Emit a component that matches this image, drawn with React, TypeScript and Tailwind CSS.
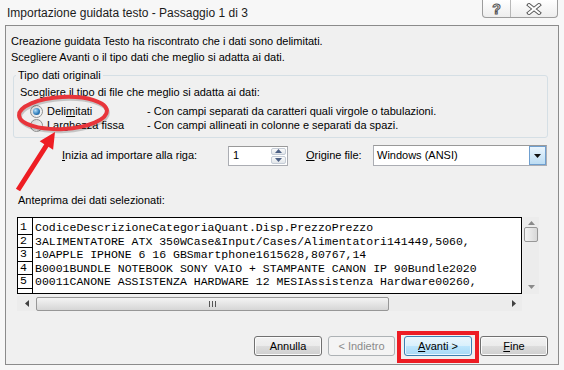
import type { ReactNode } from 'react'

const previewRows = [
  'CodiceDescrizioneCategoriaQuant.Disp.PrezzoPrezzo',
  '3ALIMENTATORE ATX 350WCase&Input/Cases/Alimentatori141449,5060,',
  '10APPLE IPHONE 6 16 GBSmartphone1615628,80767,14',
  'B0001BUNDLE NOTEBOOK SONY VAIO + STAMPANTE CANON IP 90Bundle2020',
  '00011CANONE ASSISTENZA HARDWARE 12 MESIAssistenza Hardware00260,',
]

function Radio({ checked }: { checked?: boolean }) {
  return (
    <span className="flex h-[13px] w-[13px] items-center justify-center rounded-full border border-[#8e8f8f] bg-gradient-to-br from-[#d4d4d4] to-[#fbfbfb]">
      {checked && (
        <span className="h-[7px] w-[7px] rounded-full bg-[radial-gradient(circle_at_35%_35%,#b4e0fb,#2b79b8_60%,#174a7c)]" />
      )}
    </span>
  )
}

function Tri({ dir, color = '#404040' }: { dir: 'up' | 'down' | 'left' | 'right'; color?: string }) {
  const d = {
    up: 'M0 4L3.5 0L7 4z',
    down: 'M0 0L3.5 4L7 0z',
    left: 'M4 0L0 3.5L4 7z',
    right: 'M0 0L4 3.5L0 7z',
  }[dir]
  const w = dir === 'up' || dir === 'down' ? 7 : 4
  const h = dir === 'up' || dir === 'down' ? 4 : 7
  return (
    <svg width={w} height={h} viewBox={`0 0 ${w} ${h}`}>
      <path d={d} fill={color} />
    </svg>
  )
}

function Btn({ children, kind, w }: { children: ReactNode; kind?: 'default' | 'disabled'; w: string }) {
  const base = 'flex h-[20px] items-center justify-center rounded-[3px] border leading-[14px]'
  if (kind === 'disabled')
    return <div className={`${base} ${w} border-[#adb2b5] bg-[#f4f4f4] text-[#8a8a8a]`}>{children}</div>
  if (kind === 'default')
    return (
      <div
        className={`${base} ${w} border-[#3c7fb1] bg-[linear-gradient(#eaf6fd,#d9f0fc_50%,#bee6fd_50%,#a7d9f5)] shadow-[inset_0_0_0_1px_#e8f6ff]`}
      >
        {children}
      </div>
    )
  return (
    <div
      className={`${base} ${w} border-[#707070] bg-[linear-gradient(#f2f2f2,#ebebeb_50%,#dddddd_50%,#cfcfcf)] shadow-[inset_0_0_0_1px_#fbfbfb]`}
    >
      {children}
    </div>
  )
}

export default function App() {
  return (
    <div className="relative h-[370px] w-[564px] overflow-hidden bg-[#f7f7f7] font-['Liberation_Sans',Arial,sans-serif] text-[11px] text-black">
      {/* title bar */}
      <div className="flex h-[25px]">
        <span className="pl-[7px] pt-[6px] text-[12px] leading-[15px] text-[#1b1b1b]">
          Importazione guidata testo - Passaggio 1 di 3
        </span>
        <div className="ml-auto mr-[6px] flex h-[18px] rounded-b-[4px] border border-t-0 border-[#9d9d9d] bg-gradient-to-b from-white to-[#eeeeee]">
          <div className="flex w-[28px] items-center justify-center border-r border-[#b8b8b8] text-[14px] font-bold leading-[14px] text-white [-webkit-text-stroke:1px_#555]">
            ?
          </div>
          <div className="flex w-[46px] items-center justify-center">
            <svg width="16" height="12" viewBox="0 0 16 12">
              <path d="M3 2L13 10M13 2L3 10" stroke="#5a5a5a" strokeWidth="4" strokeLinecap="square" />
              <path d="M3 2L13 10M13 2L3 10" stroke="#fff" strokeWidth="2" strokeLinecap="square" />
            </svg>
          </div>
        </div>
      </div>

      {/* dialog body */}
      <div className="mx-[5px] h-[340px] w-[554px] border border-[#8b8b8b] bg-[#f0f0f0]">
        <div className="pl-[5px] pt-[7px] leading-[16px]">
          <p>Creazione guidata Testo ha riscontrato che i dati sono delimitati.</p>
          <p>Scegliere Avanti o il tipo dati che meglio si adatta ai dati.</p>
        </div>

        <fieldset className="ml-[7px] mt-[3px] w-[535px] rounded-[3px] border border-[#d5dfe5] pb-[5px]">
          <legend className="ml-[2px] px-[2px] leading-[14px]">Tipo dati originali</legend>
          <div className="pl-[6px] pt-[2px] leading-[16px]">Scegliere il tipo di file che meglio si adatta ai dati:</div>
          <div className="mt-[4px] flex h-[14px] items-center">
            <div className="flex w-[133px] items-center pl-[16px]">
              <Radio checked />
              <span className="ml-[4px]">
                Deli<u>m</u>itati
              </span>
            </div>
            <span>- Con campi separati da caratteri quali virgole o tabulazioni.</span>
          </div>
          <div className="flex h-[14px] items-center">
            <div className="flex w-[133px] items-center pl-[16px]">
              <Radio />
              <span className="ml-[4px]">
                Lar<u>g</u>hezza fissa
              </span>
            </div>
            <span>- Con campi allineati in colonne e separati da spazi.</span>
          </div>
        </fieldset>

        <div className="mt-[7px] flex h-[21px] items-center">
          <span className="ml-[56px] w-[166px]">
            <u>I</u>nizia ad importare alla riga:
          </span>
          <div className="flex h-[20px] w-[60px] border border-[#abadb3] border-t-[#999] bg-white">
            <span className="flex flex-1 items-center pl-[4px]">1</span>
            <div className="flex w-[17px] flex-col gap-px p-px">
              <div className="flex flex-1 items-center justify-center rounded-[2px] border border-[#c5ccd6] bg-gradient-to-b from-[#fafafa] to-[#e2e6ea]">
                <Tri dir="up" color="#4d6185" />
              </div>
              <div className="flex flex-1 items-center justify-center rounded-[2px] border border-[#c5ccd6] bg-gradient-to-b from-[#fafafa] to-[#e2e6ea]">
                <Tri dir="down" color="#4d6185" />
              </div>
            </div>
          </div>
          <span className="ml-[18px] w-[67px]">
            <u>O</u>rigine file:
          </span>
          <div className="flex h-[21px] w-[174px] items-center border border-[#abadb3] border-t-[#999] bg-white">
            <span className="flex-1 pl-[3px]">Windows (ANSI)</span>
            <div className="flex h-[19px] w-[17px] items-center justify-center border border-[#6f9fcf] bg-gradient-to-b from-[#eaf5fd] to-[#bcdcf3]">
              <Tri dir="down" color="#111" />
            </div>
          </div>
        </div>

        <div className="ml-[12px] mt-[26px] leading-[16px]">Anteprima dei dati selezionati:</div>

        <div className="ml-[11px] mt-[9px] flex flex-col">
          <div className="flex">
            <div className="flex h-[77px] w-[505px] overflow-hidden border border-black bg-white font-['Liberation_Mono','Courier_New',monospace] text-[11.5px]">
              <div className="flex w-[15px] shrink-0 flex-col border-r border-black pt-[3px]">
                {previewRows.map((_, i) => (
                  <div key={i} className="h-[13.5px] border-b border-black pl-[2px] leading-[12.5px]">
                    {i + 1}
                  </div>
                ))}
              </div>
              <div className="overflow-hidden whitespace-pre pl-[2px] pt-[3px] leading-[13.5px]">
                {previewRows.map((r, i) => (
                  <div key={i}>{r}</div>
                ))}
              </div>
            </div>
            <div className="ml-[1px] flex h-[77px] w-[16px] flex-col bg-[#ececec]">
              <div className="flex h-[10px] items-end justify-center pb-[2px]">
                <Tri dir="up" color="#8a8a8a" />
              </div>
              <div className="mx-[1px] h-[15px] rounded-[2px] border border-[#979797] bg-gradient-to-r from-[#f4f4f4] to-[#d8d8d8]" />
              <div className="flex-1" />
              <div className="flex h-[14px] items-center justify-center">
                <Tri dir="down" color="#8a8a8a" />
              </div>
            </div>
          </div>
          <div className="mt-[2px] flex h-[15px] w-[505px] items-center bg-[#ececec]">
            <div className="flex w-[19px] items-center justify-center">
              <Tri dir="left" />
            </div>
            <div className="flex h-[14px] w-[353px] items-center justify-center rounded-[2px] border border-[#979797] bg-gradient-to-b from-[#f4f4f4] to-[#d6d6d6]">
              <svg width="7" height="6" viewBox="0 0 7 6">
                <path d="M0.5 0V6M3.5 0V6M6.5 0V6" stroke="#555" strokeWidth="1" />
              </svg>
            </div>
            <div className="flex-1" />
            <div className="flex w-[16px] items-center justify-center">
              <Tri dir="right" />
            </div>
          </div>
        </div>

        <div className="mt-[25px] flex">
          <div className="ml-[248px]">
            <Btn w="w-[68px]">Annulla</Btn>
          </div>
          <div className="ml-[6px]">
            <Btn w="w-[67px]" kind="disabled">
              &lt; Indietro
            </Btn>
          </div>
          <div className="ml-[9px]">
            <Btn w="w-[68px]" kind="default">
              <span>
                <u>A</u>vanti &gt;
              </span>
            </Btn>
          </div>
          <div className="ml-[8px]">
            <Btn w="w-[68px]">
              <span>
                <u>F</u>ine
              </span>
            </Btn>
          </div>
        </div>
      </div>

      {/* red annotations drawn over the screenshot */}
      <svg className="pointer-events-none absolute left-0 top-0" width="564" height="370" viewBox="0 0 564 370">
        <ellipse cx="64" cy="115" rx="44" ry="16" fill="none" stroke="rgba(0,0,0,0.18)" strokeWidth="4" transform="rotate(-3 64 115)" />
        <ellipse cx="63" cy="113" rx="44" ry="16" fill="none" stroke="#e8353b" strokeWidth="4" transform="rotate(-3 63 113)" />
        <polygon
          points="55,132 53.1,149.8 48.5,146.8 20.1,191.3 15.9,188.7 44.3,144.2 39.7,141.2"
          fill="#ee1d23"
        />
      </svg>
      <div className="pointer-events-none absolute left-[397px] top-[331px] h-[32px] w-[82px] border-[4px] border-[#ed1c24]" />
    </div>
  )
}
